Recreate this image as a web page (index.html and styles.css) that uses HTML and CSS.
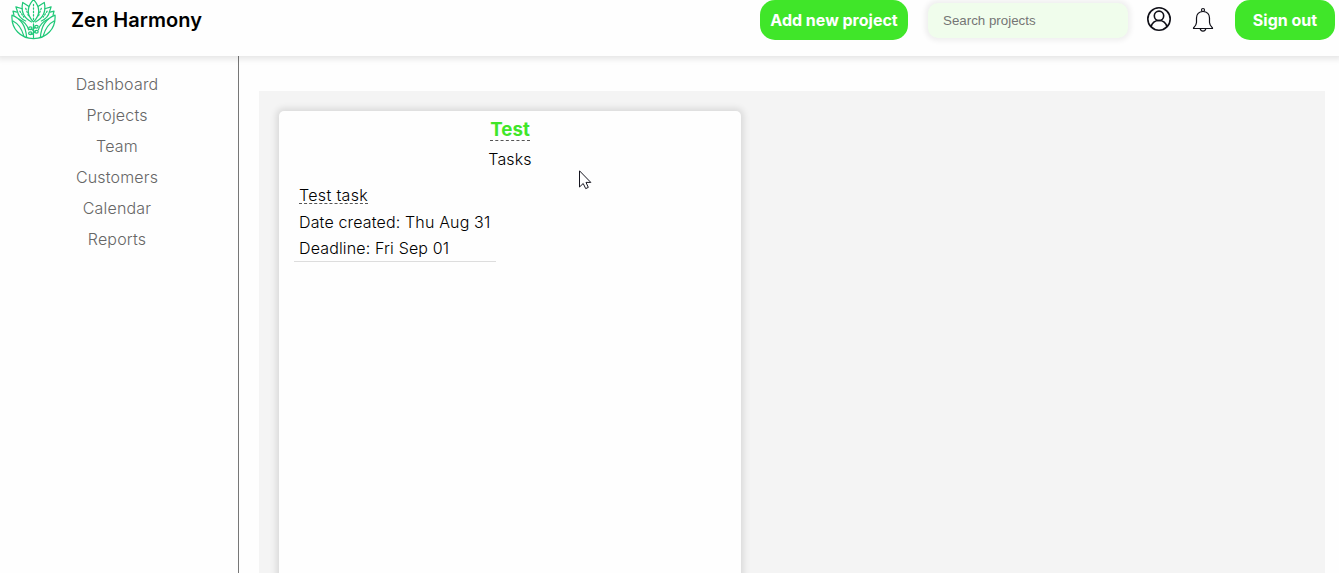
FILE: index.html
```html
<!DOCTYPE html>
<html lang="en">
<head>
<meta charset="utf-8">
<title>Zen Harmony</title>
<link rel="stylesheet" href="styles.css">
</head>
<body>
<header class="header">
  <svg class="logo" viewBox="0 0 46 40" fill="none" stroke="#1fc878" stroke-width="1.25" stroke-linejoin="round" stroke-linecap="round">
    <path d="M23 -1C16 7 16 15 23 22C30 15 30 7 23 -1Z"/>
    <path d="M23 4V20" stroke-dasharray="1.5 2"/>
    <path d="M18 6L12 2C10 11 13 18 21 22M28 6L34 2C36 11 33 18 25 22"/>
    <path d="M11.5 8.500L5 6.500L6.500 11C7.500 16 10 19 15 21M34.500 8.500L41 6.500L39.500 11C38.500 16 36 19 31 21"/>
    <path d="M15 8L18 16M31 8L28 16M9 11L13 17M37 11L33 17" stroke-dasharray="1.5 1.8"/>
    <path d="M6 12L2 11L3 15M40 12L44 11L43 15"/>
    <path d="M1 15C0 29 10 39 23 39C36 39 46 29 45 15C37 18 31 24 30 38M1 15C9 18 15 24 16 38"/>
    <path d="M2 21C8 24 11 29 13 36M44 21C38 24 35 29 33 36M8 19C14 22 17 26 18 30M38 19C32 22 29 26 28 30"/>
    <path d="M23 24V38M23 31L20.500 29M23 35L20.500 33.500M23 29L25 27.500M23 33L25 32"/>
    <ellipse cx="19.800" cy="28.500" rx="1.8" ry="1.4"/><ellipse cx="26" cy="27" rx="1.8" ry="1.4"/><ellipse cx="19.800" cy="33.500" rx="1.8" ry="1.4"/><ellipse cx="26" cy="32" rx="1.8" ry="1.4"/>
  </svg>
  <h1 class="brand">Zen Harmony</h1>
  <button class="button add">Add new project</button>
  <input class="search" type="text" placeholder="Search projects">
  <svg class="user" viewBox="0 0 26 26" fill="none" stroke="#101018" stroke-width="1.6">
    <circle cx="13" cy="13" r="11.2"/><circle cx="13" cy="9.8" r="4.7"/><path d="M5 21C6 17 9 14.5 13 14.5S20 17 21 21"/>
  </svg>
  <svg class="bell" viewBox="0 0 22 26" fill="none" stroke="#101018" stroke-width="1.2" stroke-linejoin="round">
    <circle cx="11" cy="3" r="1.5"/><path d="M11 4.500C6.800 4.500 4.500 7.200 4.500 11V15.500C4.500 18 3 19.500 1.500 21V21.500H20.500V21C19 19.500 17.500 18 17.500 15.500V11C17.500 7.200 15.200 4.500 11 4.500ZM8.200 21.500C8.600 25 13.400 25 13.800 21.500"/>
  </svg>
  <button class="button signout">Sign out</button>
</header>
<div class="layout">
  <nav class="sidebar">
    <a>Dashboard</a><a>Projects</a><a>Team</a><a>Customers</a><a>Calendar</a><a>Reports</a>
  </nav>
  <main class="content">
    <section class="board">
      <article class="card">
        <h2 class="title"><span>Test</span></h2>
        <p class="subtitle">Tasks</p>
        <div class="task">
          <p class="task-name"><span>Test task</span></p>
          <p class="created">Date created: Thu Aug 31</p>
          <p class="deadline">Deadline: Fri Sep 01</p>
        </div>
      </article>
    </section>
  </main>
</div>
<svg class="cursor" viewBox="0 0 13 20" fill="#fff" stroke="#15151f" stroke-width="1"><path d="M.5 .8V17L4.2 13.5L6.7 18.6L9.3 17.4L7 12.4H11.8Z"/></svg>
</body>
</html>
```
FILE: styles.css
```css
* { box-sizing: border-box; }
body {
  margin: 0;
  height: 573px;
  overflow: hidden;
  background: #fefefe;
  color: #000;
  font: 300 16px/20px Inter, sans-serif;
}
h1, h2, p { margin: 0; }
.header {
  position: relative;
  display: flex;
  align-items: flex-start;
  height: 56px;
  padding: 0 4px 0 11px;
  background: #fefefe;
  box-shadow: 0 0 6px 3px rgba(0, 0, 0, .1);
}
.logo { width: 45px; height: 40px; flex: none; }
.brand {
  margin: 0 auto 0 15px;
  font-size: 20px;
  line-height: 40px;
  font-weight: 600;
  letter-spacing: .05px;
}
.button {
  flex: none;
  height: 40px;
  padding: 0;
  border: 0;
  border-radius: 15px;
  background: #40e629;
  color: #fff;
  font: 700 16px/40px Inter, sans-serif;
  white-space: nowrap;
}
.add { width: 148px; }
.search {
  width: 200px;
  height: 35px;
  margin: 3px 18px 0 20px;
  padding: 0 15px;
  border: 0;
  border-radius: 10px;
  background: #f0fdec;
  box-shadow: 0 0 5px 3px rgba(0, 0, 0, .06);
  font: 13.333px "Liberation Sans", Arial, sans-serif;
}
.search::placeholder { color: #757575; }
.user { width: 26px; height: 26px; margin-top: 6px; }
.bell { width: 22px; height: 26px; margin: 7px 21px 0 20px; }
.signout { width: 100px; }
.layout { display: flex; height: 517px; }
.sidebar {
  display: flex;
  flex-direction: column;
  align-items: center;
  gap: 11px;
  width: 239px;
  padding: 18px 4px 0 0;
  border-right: 1px solid #777;
  color: #666;
  letter-spacing: .17px;
}
.content { flex: 1; padding: 35px 14px 0 20px; }
.board { height: 482px; padding: 20px 20px 0; background: #f4f4f4; overflow: hidden; }
.card {
  width: 462px;
  height: 500px;
  padding: 9px 15px;
  border-radius: 5px;
  background: #fefefe;
  box-shadow: 0 0 6px 3px rgba(0, 0, 0, .1);
}
.title {
  height: 29px;
  text-align: center;
  color: #40e629;
  font-size: 18.72px;
  font-weight: 700;
}
.title span, .task-name span {
  display: inline-block;
  border-bottom: 1px dashed #555;
}
.title span { height: 21px; }
.subtitle { text-align: center; letter-spacing: .15px; }
.task {
  width: 202px;
  height: 85px;
  margin-top: 8px;
  padding: 8px 0 0 5px;
  border-bottom: 1px solid #ddd;
  white-space: nowrap;
  letter-spacing: .15px;
}
.task-name { height: 27px; letter-spacing: .33px; }
.task-name span { height: 19px; }
.created { height: 26px; }
.cursor { position: absolute; left: 579px; top: 170px; width: 13px; height: 20px; }
```
